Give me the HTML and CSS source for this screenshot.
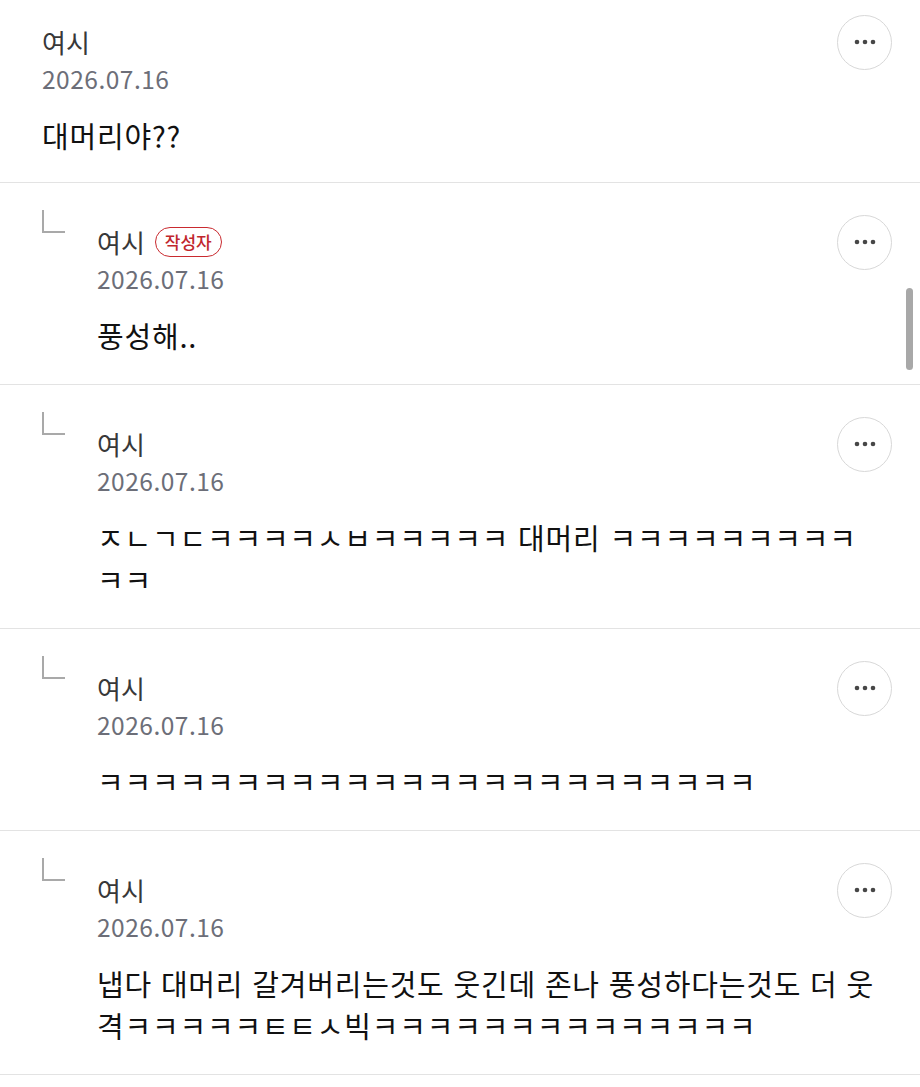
FILE: index.html
```html
<!DOCTYPE html>
<html lang="ko">

<head>
    <meta charset="UTF-8">
    <meta name="viewport" content="width=device-width, initial-scale=1.0">
    <title>댓글</title>
    <link rel="stylesheet" href="styles.css">
</head>

<body>

    <ul id="comment-list">
        <li class="comment">
            <div class="comment-main">
                <div class="comment-head">
                    <div class="meta">
                        <div class="author">여시</div>
                        <div class="date">2026.07.16</div>
                    </div>
                    <button class="more-btn" aria-label="더보기">
                        <svg width="22" height="6" viewBox="0 0 22 6"><circle cx="3" cy="3" r="2.3" /><circle cx="11" cy="3" r="2.3" /><circle cx="19" cy="3" r="2.3" /></svg>
                    </button>
                </div>
                <p class="text">대머리야??</p>
            </div>
        </li>

        <li class="comment reply">
            <span class="reply-mark"></span>
            <div class="comment-main">
                <div class="comment-head">
                    <div class="meta">
                        <div class="author">여시 <span class="writer-badge">작성자</span></div>
                        <div class="date">2026.07.16</div>
                    </div>
                    <button class="more-btn" aria-label="더보기">
                        <svg width="22" height="6" viewBox="0 0 22 6"><circle cx="3" cy="3" r="2.3" /><circle cx="11" cy="3" r="2.3" /><circle cx="19" cy="3" r="2.3" /></svg>
                    </button>
                </div>
                <p class="text">풍성해..</p>
            </div>
        </li>

        <li class="comment reply">
            <span class="reply-mark"></span>
            <div class="comment-main">
                <div class="comment-head">
                    <div class="meta">
                        <div class="author">여시</div>
                        <div class="date">2026.07.16</div>
                    </div>
                    <button class="more-btn" aria-label="더보기">
                        <svg width="22" height="6" viewBox="0 0 22 6"><circle cx="3" cy="3" r="2.3" /><circle cx="11" cy="3" r="2.3" /><circle cx="19" cy="3" r="2.3" /></svg>
                    </button>
                </div>
                <p class="text">ㅈㄴㄱㄷㅋㅋㅋㅋㅅㅂㅋㅋㅋㅋㅋ 대머리 ㅋㅋㅋㅋㅋㅋㅋㅋㅋㅋㅋ</p>
            </div>
        </li>

        <li class="comment reply">
            <span class="reply-mark"></span>
            <div class="comment-main">
                <div class="comment-head">
                    <div class="meta">
                        <div class="author">여시</div>
                        <div class="date">2026.07.16</div>
                    </div>
                    <button class="more-btn" aria-label="더보기">
                        <svg width="22" height="6" viewBox="0 0 22 6"><circle cx="3" cy="3" r="2.3" /><circle cx="11" cy="3" r="2.3" /><circle cx="19" cy="3" r="2.3" /></svg>
                    </button>
                </div>
                <p class="text">ㅋㅋㅋㅋㅋㅋㅋㅋㅋㅋㅋㅋㅋㅋㅋㅋㅋㅋㅋㅋㅋㅋㅋㅋ</p>
            </div>
        </li>

        <li class="comment reply">
            <span class="reply-mark"></span>
            <div class="comment-main">
                <div class="comment-head">
                    <div class="meta">
                        <div class="author">여시</div>
                        <div class="date">2026.07.16</div>
                    </div>
                    <button class="more-btn" aria-label="더보기">
                        <svg width="22" height="6" viewBox="0 0 22 6"><circle cx="3" cy="3" r="2.3" /><circle cx="11" cy="3" r="2.3" /><circle cx="19" cy="3" r="2.3" /></svg>
                    </button>
                </div>
                <p class="text">냅다 대머리 갈겨버리는것도 웃긴데 존나 풍성하다는것도 더 웃격ㅋㅋㅋㅋㅋㅌㅌㅅ빅ㅋㅋㅋㅋㅋㅋㅋㅋㅋㅋㅋㅋㅋㅋ</p>
            </div>
        </li>
    </ul>

    <div class="scroll-thumb"></div>

</body>

</html>
```

FILE: styles.css
```css
body {
    font-family: "Noto Sans CJK KR", "Noto Sans", sans-serif;
    margin: 0;
    padding: 0;
    background-color: #fff;
    position: relative;
    min-height: 1087px;
}

#comment-list {
    list-style: none;
    margin: 0;
    padding: 0;
}

.comment {
    display: flex;
    align-items: flex-start;
    padding: 24px 28px 26px 42px;
    border-bottom: 1px solid #e3e3e3;
}

.comment.reply {
    padding: 22px 28px 28px 42px;
}

.reply-mark {
    flex: none;
    width: 23px;
    height: 23px;
    margin-top: 5px;
    margin-right: 32px;
    border-left: 2px solid #a9a9a9;
    border-bottom: 2px solid #a9a9a9;
    box-sizing: border-box;
}

.comment-main {
    flex: 1;
    min-width: 0;
}

.reply .comment-main {
    padding-top: 19px;
}

.comment-head {
    display: flex;
    justify-content: space-between;
    align-items: flex-start;
}

.author {
    display: flex;
    align-items: center;
    gap: 10px;
    font-size: 26px;
    line-height: 36px;
    color: #383838;
}

.writer-badge {
    display: inline-flex;
    align-items: center;
    height: 30px;
    padding: 0 9px;
    border: 1.5px solid #c92a2f;
    border-radius: 15px;
    box-sizing: border-box;
    font-size: 17px;
    font-weight: 500;
    color: #c1272d;
}

.date {
    font-size: 24.5px;
    letter-spacing: 0.5px;
    line-height: 38px;
    color: #6c6e78;
}

.more-btn {
    flex: none;
    width: 55px;
    height: 55px;
    margin-top: -9.5px;
    padding: 0;
    border: 1px solid #d8d8d8;
    border-radius: 50%;
    background-color: #fff;
    display: flex;
    align-items: center;
    justify-content: center;
    cursor: pointer;
}

.more-btn svg {
    fill: #474747;
}

.text {
    margin: 16px 8px 0 0;
    font-size: 29px;
    letter-spacing: 0.8px;
    line-height: 42px;
    color: #111;
    word-break: break-all;
}

.scroll-thumb {
    position: absolute;
    top: 288px;
    right: 7px;
    width: 7px;
    height: 82px;
    border-radius: 4px;
    background-color: #a8a8a8;
}
```
